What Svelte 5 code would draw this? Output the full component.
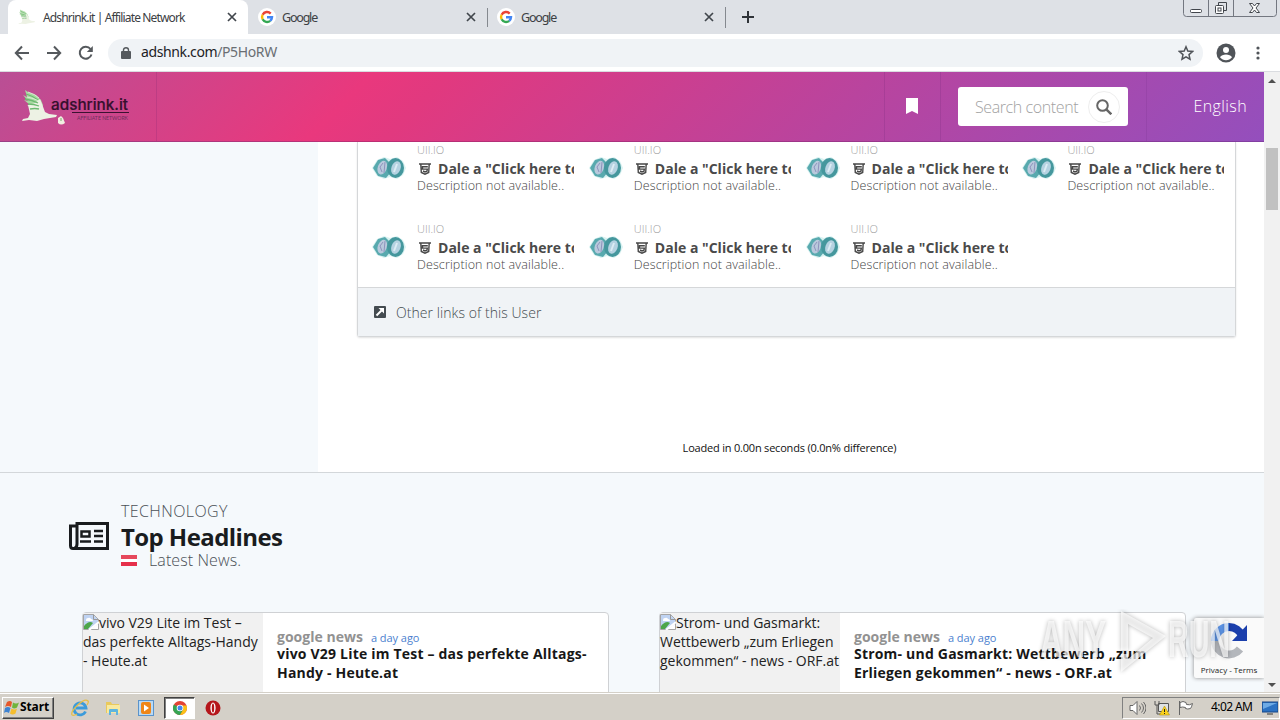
<script lang="ts">
	const tabs = [
		{ title: 'Adshrink.it | Affiliate Network', icon: 'bird', active: true },
		{ title: 'Google', icon: 'google', active: false },
		{ title: 'Google', icon: 'google', active: false }
	];

	const links = Array.from({ length: 7 }, () => ({
		site: 'UII.IO',
		title: 'Dale a "Click here to continue"',
		description: 'Description not available..'
	}));

	const news = [
		{ title: 'vivo V29 Lite im Test – das perfekte Alltags-Handy - Heute.at', source: 'google news', time: 'a day ago' },
		{ title: 'Strom- und Gasmarkt: Wettbewerb „zum Erliegen gekommen“ - news - ORF.at', source: 'google news', time: 'a day ago' }
	];
</script>

{#snippet bird()}
	<path d="M4 1l3 2 8 3 5 5 2 5-1 7-10-3-5-4 3 0-6-5 4 1-5-6 4 2z" fill="#a9d8a2" />
	<path d="M7 16l7-2 5-4 2 5 3 8 4 2 8 1-1 2-12 2-7 2-8-1-7 1 1-2 5-1 2-4z" fill="#edf2e4" />
	<path d="M5 5q7 2 12 6M4 10q7 1 13 4M7 15q6 0 11 2M9 20q5-1 9 0" fill="none" stroke="#6cb970" stroke-width="1.3" />
	<path d="M7 3q7 2 11 6M6 8q6 1 12 4" fill="none" stroke="#e6f3df" stroke-width=".8" />
{/snippet}

{#snippet close()}
	<svg class="close" viewBox="0 0 10 10"><path d="M1 1l8 8M9 1L1 9" stroke="#41464c" stroke-width="1.7" /></svg>
{/snippet}

<div class="screen">
	<div class="tabbar">
		{#each tabs as tab}
			<div class="tab" class:active={tab.active}>
				{#if tab.icon === 'bird'}
					<svg class="favicon" viewBox="0 0 38 34">{@render bird()}</svg>
				{:else}
					<svg class="favicon" viewBox="0 0 18 18" fill="none" stroke-width="2.4">
						<circle cx="9" cy="9" r="9" fill="#fff" />
						<path d="M12.7 5.6A5 5 0 0 0 4.6 6.7" stroke="#ea4335" />
						<path d="M4.6 6.7a5 5 0 0 0 0 4.6" stroke="#fbbc05" />
						<path d="M4.6 11.3a5 5 0 0 0 7.6 1.5" stroke="#34a853" />
						<path d="M12.2 12.8A5 5 0 0 0 14 9.2H9" stroke="#4285f4" />
					</svg>
				{/if}
				<span class="tab-title">{tab.title}</span>
				{@render close()}
			</div>
		{/each}
		<svg class="plus" viewBox="0 0 12 12"><path d="M6 0v12M0 6h12" stroke="#2f3338" stroke-width="2" /></svg>
		<svg class="window-buttons" viewBox="0 0 94 18" fill="none" stroke="#737780">
			<path d="M.5 0v13.5q0 3 3 3h87q3 0 3-3V0M25.500 0v16M50.500 0v16" />
			<g stroke="#42464c">
				<rect x="7.500" y="9.500" width="11" height="3" rx="1" fill="#fff" />
				<path d="M35.500 5V2.500h8v8H41" />
				<rect x="32.500" y="5.500" width="8" height="8" rx="1" fill="#fff" />
				<rect x="35" y="8" width="3" height="3" />
				<path d="M66.500 3.500h3l2 2.500 2-2.500h3l-3.500 4.500 3.500 4.500h-3l-2-2.500-2 2.500h-3L70 8z" fill="#fff" />
			</g>
		</svg>
	</div>

	<div class="toolbar">
		<svg class="nav" viewBox="0 0 16 16"><path d="M15 8H2M8 1.500L1.800 8 8 14.500" /></svg>
		<svg class="nav" viewBox="0 0 16 16"><path d="M1 8h13M8 1.500L14.200 8 8 14.500" /></svg>
		<svg class="nav" viewBox="0 0 16 16"><path d="M13.500 9.500A6 6 0 1 1 12.500 4" /><path d="M14.800 1v6h-6z" fill="#55595d" stroke="none" /></svg>
		<div class="address">
			<svg class="lock" viewBox="0 0 10 12"><rect y="4" width="10" height="8" rx="1" fill="#55595d" /><path d="M2.500 5V3a2.500 2.300 0 0 1 5 0v2" fill="none" stroke="#55595d" stroke-width="1.400" /></svg>
			<span class="url">adshnk.com<i>/P5HoRW</i></span>
			<svg class="star" viewBox="0 0 16 16"><path d="M8 1.800l1.800 4.300 4.700.4-3.500 3.100 1 4.600L8 11.800l-4 2.400 1-4.600-3.500-3.100 4.700-.4z" fill="none" stroke="#505459" stroke-width="1.500" /></svg>
		</div>
		<svg class="account" viewBox="0 0 20 20"><circle cx="10" cy="10" r="9.500" fill="#505459" /><circle cx="10" cy="7" r="3" fill="#fff" /><path d="M4 14.300c2-3.600 10-3.600 12 0-3 4-9 4-12 0z" fill="#fff" /></svg>
		<svg class="dots" viewBox="0 0 4 14" fill="#505459"><circle cx="2" cy="2" r="1.600" /><circle cx="2" cy="7" r="1.600" /><circle cx="2" cy="12" r="1.600" /></svg>
	</div>

	<div class="browser">
		<div class="page">
			<header>
				<div class="brand">
					<svg width="110" height="36" viewBox="0 0 110 36">
						{@render bird()}
						<path d="M37 29l3-2 2 2 2 5q-4 3-7 0z" fill="#f1eee1" />
						<path d="M40 29v3" stroke="#76a86c" />
						<text x="30" y="20.500" textLength="77" lengthAdjust="spacingAndGlyphs" class="logo-text">adshrink.it</text>
						<path d="M51 23.500h57" stroke="#3b1231" />
						<text x="56" y="31" textLength="51" lengthAdjust="spacingAndGlyphs" class="logo-sub">AFFILIATE NETWORK</text>
					</svg>
				</div>
				<div class="space"></div>
				<div class="bookmark">
					<svg width="12" height="16" viewBox="0 0 12 16"><path d="M0 0h12v16l-6-3-6 3z" fill="#fff" /></svg>
				</div>
				<div class="search-cell">
					<div class="search">
						<span>Search content</span>
						<div class="search-btn">
							<svg width="16" height="16" viewBox="0 0 16 16" fill="none" stroke="#666"><circle cx="6.500" cy="6.500" r="5.300" stroke-width="2" /><path d="M10.300 10.300l5 5" stroke-width="2.400" /></svg>
						</div>
					</div>
				</div>
				<div class="lang">English</div>
			</header>

			<main>
				<aside></aside>
				<div class="content">
					<div class="card">
						<div class="links">
							{#each links as link}
								<div class="link">
									<svg class="coins" width="34" height="26" viewBox="0 0 34 26">
										<path d="M0 13L5 5l7-3 6 2 7-2 6 4 3 7-3 7-6 4-7-2-6 2-7-3z" fill="#d8f2f1" />
										<path d="M1 13l5-8 7-2 6 6v8l-5 6-8-2z" fill="#58a9ae" />
										<ellipse cx="23.500" cy="13" rx="8.500" ry="10" fill="#45979d" />
										<ellipse cx="10.500" cy="12.500" rx="4.500" ry="7" fill="#b9c9dc" transform="rotate(20 10 12)" />
										<ellipse cx="24" cy="13" rx="4.600" ry="7" fill="#b5d2e1" transform="rotate(20 24 13)" />
										<path d="M11 8l-3 4 2 5M13 7l-1 11" fill="none" stroke="#8f93bd" />
										<path d="M25 9l-3 8" fill="none" stroke="#dcecf4" stroke-width="2" />
									</svg>
									<div class="link-text">
										<div class="site">{link.site}</div>
										<div class="title">
											<svg width="12" height="12" viewBox="0 0 12 12"><path d="M0 1h12M1.800 1l.5 8.500L6 11.200l3.700-1.700L10.200 1M8.800 3.700H3.500v2.400h4.800L8 8.200l-2 .8-2-1" fill="none" stroke="#474747" stroke-width="1.400" /></svg>
											<b>{link.title}</b>
										</div>
										<div class="desc">{link.description}</div>
									</div>
								</div>
							{/each}
						</div>
						<div class="card-footer">
							<svg width="12" height="12" viewBox="0 0 12 12"><rect width="12" height="12" rx="1" fill="#444b50" /><path d="M2.500 9.500l5-5" fill="none" stroke="#fff" stroke-width="2" /><path d="M4.500 2H10v5.500z" fill="#fff" /></svg>
							<span>Other links of this User</span>
						</div>
					</div>
					<div class="loaded">Loaded in 0.00n seconds (0.0n% difference)</div>
				</div>
			</main>

			<section>
				<div class="heading">
					<svg width="40" height="28" viewBox="0 0 40 28" fill="none" stroke="#191c1e" stroke-width="3">
						<path d="M8 1.500h30.500v25H4q-2.500 0-2.500-3V4H8zM8 2v20q0 4-3 4.500" />
						<path d="M12.500 9.500h8v5h-8zM25 9h9M25 14h9M11 19.500h11M25 19.500h9" stroke-width="2.500" />
					</svg>
					<div>
						<div class="category">TECHNOLOGY</div>
						<h2>Top Headlines</h2>
						<div class="latest"><span class="flag"></span>Latest News.</div>
					</div>
				</div>
				<div class="news">
					{#each news as item}
						<article>
							<div class="thumb">
								<svg width="16" height="16" viewBox="0 0 16 16"><path d="M.5.5h10l5 5v10H.5z" fill="#fff" stroke="#a5a5a5" /><path d="M1 1h9.500L15 5.500V10L8 15H1z" fill="#bfd3f2" /><path d="M3 6q0-2 2-2 2-1 3 1 2 0 2 2H3z" fill="#fff" /><path d="M1 15v-3q5-6 9-3l-5 6z" fill="#4da64a" /><path d="M10.500.5v5h5" fill="none" stroke="#999" /><path d="M6 16l10-8" stroke="#fff" stroke-width="2" /></svg>{item.title}
							</div>
							<div class="news-body">
								<div class="meta"><b>{item.source}</b><span>{item.time}</span></div>
								<h3>{item.title}</h3>
							</div>
						</article>
					{/each}
				</div>
			</section>

			<div class="captcha">
				<svg width="38" height="38" viewBox="0 0 38 38" fill="none" stroke-width="8">
					<path d="M5 19A14 14 0 0 1 19 5" stroke="#5f98ec" />
					<path d="M19 5a14 14 0 0 1 13 9" stroke="#1b3fac" />
					<path d="M37 3v16H22z" fill="#1b3fac" stroke="none" />
					<path d="M5 19a14 14 0 0 0 25 8" stroke="#b4b7bc" />
				</svg>
				<span>Privacy - Terms</span>
			</div>
		</div>
		<div class="scrollbar">
			<i class="up"></i>
			<div class="thumb-bar"></div>
			<i class="down"></i>
		</div>
	</div>

	<div class="taskbar">
		<div class="start">
			<svg width="16" height="16" viewBox="0 0 16 16"><path d="M3 2q3-2 5 0L7 7Q4 5 1 7z" fill="#e6582b" /><path d="M9 2.500q3 2 6 0l-2 5q-3 2-5 0z" fill="#70b43c" /><path d="M1 8q3-2 5.500 0L5 13q-3-2-5 0z" fill="#3e83d2" /><path d="M7.500 8.500q3 2 5.500 0l-1.500 5q-3 2-5.500 0z" fill="#f5bd2d" /></svg>
			<b>Start</b>
		</div>
		<div class="tasks">
			<div class="task">
				<svg width="18" height="18" viewBox="0 0 18 18" fill="none"><path d="M14.500 12.500A6 6 0 1 1 15 9H5" stroke="#3b9bdb" stroke-width="2.800" /><path d="M1 16C-1 12 13-2 17 2q1 1-1 4M1 16q2 1 5-1" stroke="#e5be48" stroke-width="1.300" /></svg>
			</div>
			<div class="task">
				<svg width="16" height="16" viewBox="0 0 16 16"><path d="M1 2h5l1 2h7v9H1z" fill="#e9c95c" /><path d="M2 5h13v8H2z" fill="#f8e99f" /><path d="M4 15v-5q0-1 1-1h7q1 0 1 1v5h-2v-3H6v3z" fill="#5eb5df" /></svg>
			</div>
			<div class="task">
				<svg width="16" height="16" viewBox="0 0 16 16"><rect x=".5" y=".5" width="15" height="15" fill="#b9daf5" stroke="#5a93cb" /><rect x="3" y="2" width="10" height="12" rx="2" fill="#ef8618" /><path d="M6 4.500l5 3.500-5 3.500z" fill="#fff" /></svg>
			</div>
			<div class="task current">
				<svg width="14" height="14" viewBox="0 0 14 14"><circle cx="7" cy="7" r="7" fill="#e34335" /><path d="M7 7L.9 3.500A7 7 0 0 0 7 14l3-5z" fill="#35a553" /><path d="M7 14a7 7 0 0 0 6.500-9.500H7L10 9z" fill="#fbc116" /><circle cx="7" cy="7" r="3.300" fill="#fff" /><circle cx="7" cy="7" r="2.500" fill="#4387ee" /></svg>
			</div>
			<div class="task">
				<svg width="16" height="16" viewBox="0 0 16 16"><circle cx="8" cy="8" r="7.500" fill="#b5161b" /><ellipse cx="8" cy="8" rx="2.600" ry="5.500" fill="#fff" /><ellipse cx="8" cy="8" rx="1.200" ry="4.500" fill="#b5161b" /></svg>
			</div>
		</div>
		<div class="tray">
			<svg width="17" height="16" viewBox="0 0 17 16" fill="#fff" stroke="#666"><path d="M1 5.500h3l4-4v13l-4-4H1z" /><path d="M10.500 5.500q2 2.500 0 5M12.500 3.500q4 4.500 0 9M14.500 2q5 6 0 12" fill="none" /></svg>
			<svg width="16" height="16" viewBox="0 0 16 16"><path d="M4.500 3.500h10v8h-10z" fill="#dfe2e4" stroke="#555" /><path d="M1 1v4h4V1M3 5v9h6" fill="none" stroke="#555" /><path d="M10.500 6l5 9h-10z" fill="#fbd21d" stroke="#a98a08" stroke-width=".5" /><path d="M10.500 9v3M10.500 13v1" stroke="#222" /></svg>
			<svg width="16" height="16" viewBox="0 0 16 16"><path d="M1.500 1v14" stroke="#666" /><path d="M2 2.500q3-2 6 0l.5 2q3 1 6-1-1 4-2 5-3 1-5 0v-1q-3-1-5.500 0z" fill="#fff" stroke="#666" /></svg>
			<span>4:02 AM</span>
			<svg width="16" height="14" viewBox="0 0 16 14"><rect y="1" width="16" height="10" fill="#2b72c3" stroke="#164787" /><path d="M1 2h14L1 8z" fill="#6eabe5" /><path d="M5 13h6" stroke="#333" /></svg>
		</div>
	</div>

	<svg class="watermark" viewBox="0 0 200 66">
		<g class="glyphs">
			<text x="4" y="48" textLength="66" lengthAdjust="spacingAndGlyphs">ANY</text>
			<path d="M85 2l45 25-45 36V45h7v5l25-21-25-14v26h-7z" fill-rule="evenodd" />
			<text x="132" y="48" textLength="62" lengthAdjust="spacingAndGlyphs">RUN</text>
		</g>
	</svg>
</div>

<style>
	:global(body) {
		margin: 0;
		overflow: hidden;
	}
	.screen {
		position: relative;
		width: 1280px;
		height: 720px;
		display: flex;
		flex-direction: column;
		overflow: hidden;
		background: #fff;
		font-family: 'Open Sans', 'Noto Sans', sans-serif;
	}
	.screen * {
		box-sizing: border-box;
	}
	svg {
		flex: none;
	}

	/* browser chrome */
	.tabbar {
		height: 34px;
		flex: none;
		display: flex;
		padding-left: 8px;
		background: #dee1e6;
	}
	.tab {
		display: flex;
		align-items: center;
		width: 239px;
		height: 34px;
		padding: 0 10px 0 10px;
		font: 12px 'Noto Sans', sans-serif;
		color: #3c4043;
	}
	.tab + .tab + .tab {
		background: linear-gradient(#85898f, #85898f) left 8px / 1px 19px no-repeat;
	}
	.tab:nth-child(3) {
		border-right: 1px solid;
		border-image: linear-gradient(transparent 8px, #85898f 8px 27px, transparent 27px) 1;
	}
	.tab.active {
		width: 240px;
		background: #fff;
		border-radius: 8px 8px 0 0;
	}
	.favicon {
		width: 18px;
		height: 18px;
		margin-right: 6px;
	}
	.active .favicon {
		margin-right: 7px;
	}
	.tab-title {
		flex: 1;
		white-space: nowrap;
		letter-spacing: -0.85px;
	}
	.tab:not(.active) .tab-title {
		letter-spacing: -1.2px;
		font-size: 12.5px;
	}
	.close {
		width: 10px;
		height: 10px;
		margin-right: 1px;
	}
	.plus {
		width: 12px;
		height: 12px;
		margin: 11px 0 0 16px;
	}
	.window-buttons {
		width: 94px;
		height: 18px;
		margin: 0 3px 0 auto;
	}
	.toolbar {
		height: 38px;
		flex: none;
		display: flex;
		align-items: center;
		padding-left: 14px;
		border-bottom: 1px solid #dadce0;
	}
	.nav {
		width: 16px;
		height: 16px;
		margin-right: 16px;
		fill: none;
		stroke: #55595d;
		stroke-width: 2;
	}
	.address {
		display: flex;
		align-items: center;
		width: 1095px;
		height: 28px;
		margin-left: -2px;
		padding: 0 9px 0 13px;
		border-radius: 14px;
		background: #f0f3f6;
	}
	.lock {
		width: 10px;
		height: 12px;
		margin-right: 10px;
	}
	.url {
		flex: 1;
		margin-top: -2px;
		font: 14px 'Noto Sans', sans-serif;
		letter-spacing: -0.38px;
		color: #202124;
	}
	.url i {
		font-style: normal;
		color: #6a6e73;
	}
	.star {
		width: 16px;
		height: 16px;
	}
	.account {
		width: 20px;
		height: 20px;
		margin-left: 13px;
	}
	.dots {
		width: 4px;
		height: 14px;
		margin-left: 20px;
	}

	/* page */
	.browser {
		display: flex;
		flex: 1;
		min-height: 0;
	}
	.page {
		position: relative;
		width: 1264px;
		overflow: hidden;
		display: flex;
		flex-direction: column;
	}
	header {
		display: flex;
		height: 70px;
		flex: none;
		background: linear-gradient(135deg, #b94f95 0%, #e9387d 28%, #e1397f 34%, #b9449e 66%, #944fbd 100%);
		border-bottom: 1px solid rgba(60, 20, 90, 0.25);
	}
	header > div {
		display: flex;
		align-items: center;
	}
	.brand {
		width: 157px;
		padding-left: 21px;
		border-right: 1px solid rgba(80, 20, 100, 0.14);
	}
	.logo-text {
		font: 500 15px Inter, sans-serif;
		fill: #35102d;
		stroke: #35102d;
		stroke-width: 0.2px;
	}
	.logo-sub {
		font: 5.5px 'Lato', sans-serif;
		fill: #702e5c;
	}
	.space {
		flex: 1;
	}
	.bookmark {
		width: 57px;
		justify-content: center;
		padding: 0 2px 2px 0;
		border: solid rgba(80, 20, 100, 0.14);
		border-width: 0 1px;
	}
	.search-cell {
		width: 206px;
		padding-left: 17px;
		border-right: 1px solid rgba(80, 20, 100, 0.1);
	}
	.search {
		display: flex;
		align-items: center;
		justify-content: space-between;
		width: 170px;
		height: 39px;
		padding: 0 8px 0 17px;
		border-radius: 3px;
		background: #fff;
		font-weight: 300;
		font-size: 16px;
		letter-spacing: -0.4px;
		color: #a2a2a2;
	}
	.search-btn {
		display: grid;
		place-items: center;
		width: 32px;
		height: 32px;
		border: 1px solid #eee;
		border-radius: 50%;
	}
	.lang {
		width: 117px;
		padding: 0 17px 2px 0;
		justify-content: flex-end;
		font-size: 16px;
		font-weight: 300;
		letter-spacing: 0.4px;
		color: #fff;
	}
	main {
		display: flex;
		height: 331px;
		flex: none;
		border-bottom: 1px solid #d3d7da;
	}
	aside {
		width: 318px;
		background: #f5f9fc;
	}
	.content {
		width: 946px;
	}
	.card {
		width: 879px;
		height: 195px;
		margin-left: 39px;
		border: 1px solid #d5d7d9;
		border-top: 0;
		border-radius: 0 0 3px 3px;
		box-shadow: 0 1px 2px rgba(0, 0, 0, 0.12);
	}
	.links {
		display: grid;
		grid-template-columns: repeat(4, 216.8px);
		grid-auto-rows: 79px;
		height: 145px;
	}
	.link {
		display: flex;
		padding-left: 14px;
	}
	.coins {
		margin: 13px 11px 0 0;
	}
	.link-text {
		width: 157px;
		overflow: hidden;
		white-space: nowrap;
		color: #4a4a4a;
	}
	.site {
		height: 17px;
		line-height: 15px;
		font-size: 11px;
		font-weight: 300;
		color: #a0a0a0;
	}
	.title {
		display: flex;
		align-items: center;
		height: 20px;
		padding: 0 0 1px 2px;
		font-size: 14px;
	}
	.title svg {
		margin: 1px 7px 0 0;
	}
	.title b {
		letter-spacing: 0.02px;
	}
	.desc {
		height: 16px;
		line-height: 14px;
		font-size: 12.5px;
		font-weight: 300;
		letter-spacing: 0.12px;
		color: #444;
	}
	.card-footer {
		display: flex;
		align-items: center;
		gap: 10px;
		height: 49px;
		padding-left: 16px;
		border-top: 1px solid #d5d7d9;
		background: #f0f3f6;
		font-size: 14px;
		font-weight: 300;
		letter-spacing: 0.06px;
		color: #444b50;
	}
	.loaded {
		margin: 103px 3px 0 0;
		line-height: 16px;
		text-align: center;
		font-size: 11px;
		letter-spacing: -0.2px;
		color: #111;
	}
	section {
		flex: 1;
		padding-top: 27px;
		background: #f5f9fc;
	}
	.heading {
		display: flex;
		align-items: center;
		gap: 12px;
		height: 71px;
		margin-left: 69px;
		color: #191c1e;
	}
	.category,
	.latest {
		height: 22px;
		line-height: 22px;
		font-size: 16px;
		font-weight: 300;
		color: #4a5056;
	}
	.category {
		letter-spacing: 0.4px;
	}
	h2 {
		margin: 0;
		height: 27px;
		line-height: 29px;
		font-size: 24px;
		letter-spacing: -0.58px;
	}
	.latest {
		display: flex;
		align-items: center;
		letter-spacing: 0.1px;
	}
	.flag {
		width: 16px;
		height: 11px;
		margin-right: 12px;
		background: linear-gradient(#e6485c 36%, #fff 36% 64%, #e6304b 64%);
	}
	.news {
		display: grid;
		grid-template-columns: 527px 527px;
		gap: 50px;
		margin: 41px 0 0 82px;
	}
	article {
		display: flex;
		height: 120px;
		border: 1px solid #cfd1d4;
		border-radius: 4px;
		background: #fff;
	}
	.thumb {
		width: 180px;
		flex: none;
		background: #f1f1f1;
		font-size: 14px;
		line-height: 19px;
		letter-spacing: -0.01px;
		color: #222;
	}
	.thumb svg {
		vertical-align: -2px;
	}
	.news-body {
		padding: 15px 0 0 14px;
	}
	.meta {
		display: flex;
		align-items: center;
		gap: 8px;
		height: 17px;
		font-size: 14px;
		letter-spacing: 0.02px;
		color: #929292;
	}
	.meta span {
		font-size: 11px;
		letter-spacing: -0.05px;
		padding-top: 2px;
		color: #4b7fcf;
	}
	h3 {
		margin: -1px 0 0;
		font-size: 14px;
		line-height: 19px;
		letter-spacing: 0.2px;
		color: #171717;
	}
	.captcha {
		position: absolute;
		right: 0;
		bottom: 14px;
		display: flex;
		flex-direction: column;
		align-items: center;
		width: 70px;
		height: 60px;
		padding-top: 4px;
		border-radius: 2px 0 0 2px;
		background: #fafafa;
		box-shadow: 0 0 4px #888;
	}
	.captcha span {
		margin-top: 4px;
		font-size: 8px;
		line-height: 12px;
		white-space: nowrap;
		color: #222;
	}
	.scrollbar {
		display: flex;
		flex-direction: column;
		align-items: center;
		width: 16px;
		background: #f1f1f1;
	}
	.scrollbar i {
		border: 4px solid transparent;
	}
	.up {
		margin-top: 3px;
		border-bottom-color: #505050 !important;
	}
	.down {
		margin: auto 0 1px;
		border-top-color: #505050 !important;
	}
	.thumb-bar {
		width: 12px;
		height: 62px;
		margin-top: 65px;
		background: #c1c1c1;
	}

	/* desktop taskbar */
	.taskbar {
		display: flex;
		align-items: center;
		height: 28px;
		flex: none;
		padding-left: 2px;
		border-top: 1px solid #d4d0c8;
		box-shadow: inset 0 1px #fff;
		background: #d4d0c8;
		font: 12px 'Noto Sans', sans-serif;
	}
	.start {
		display: flex;
		align-items: center;
		width: 52px;
		height: 22px;
		margin-top: 2px;
		padding-left: 1px;
		border: 1px solid;
		border-color: #fff #404040 #404040 #fff;
		box-shadow: inset -1px -1px #808080;
		font-size: 12px;
		letter-spacing: -0.1px;
		color: #000;
	}
	.start b {
		margin-top: -2px;
	}
	.tasks {
		display: flex;
		margin: 2px 0 0 9px;
	}
	.task {
		display: grid;
		place-items: center;
		width: 33px;
		height: 22px;
	}
	.current {
		width: 31px;
		margin: 0 1px 0 2px;
		border: 1px solid;
		border-color: #404040 #fff #fff #404040;
		box-shadow: inset 1px 1px #808080;
		background: #fff;
	}
	.tray {
		display: flex;
		align-items: center;
		width: 158px;
		height: 22px;
		margin: 2px 0 0 auto;
		padding-left: 6px;
		border: 1px solid;
		border-color: #808080 #fff #fff #808080;
	}
	.tray svg {
		margin-right: 8px;
	}
	.tray span {
		width: 43px;
		margin: -2px 8px 0 9px;
		white-space: nowrap;
		letter-spacing: -0.6px;
		color: #000;
	}
	.tray svg:last-child {
		margin: 0;
	}

	.watermark {
		position: absolute;
		left: 1036px;
		top: 609px;
		width: 200px;
		height: 66px;
	}
	.glyphs {
		fill: rgba(255, 255, 255, 0.68);
		filter: drop-shadow(0 0 2px rgba(0, 0, 0, 0.4));
	}
	.glyphs text {
		font: bold 51px 'Liberation Sans', sans-serif;
	}
</style>
